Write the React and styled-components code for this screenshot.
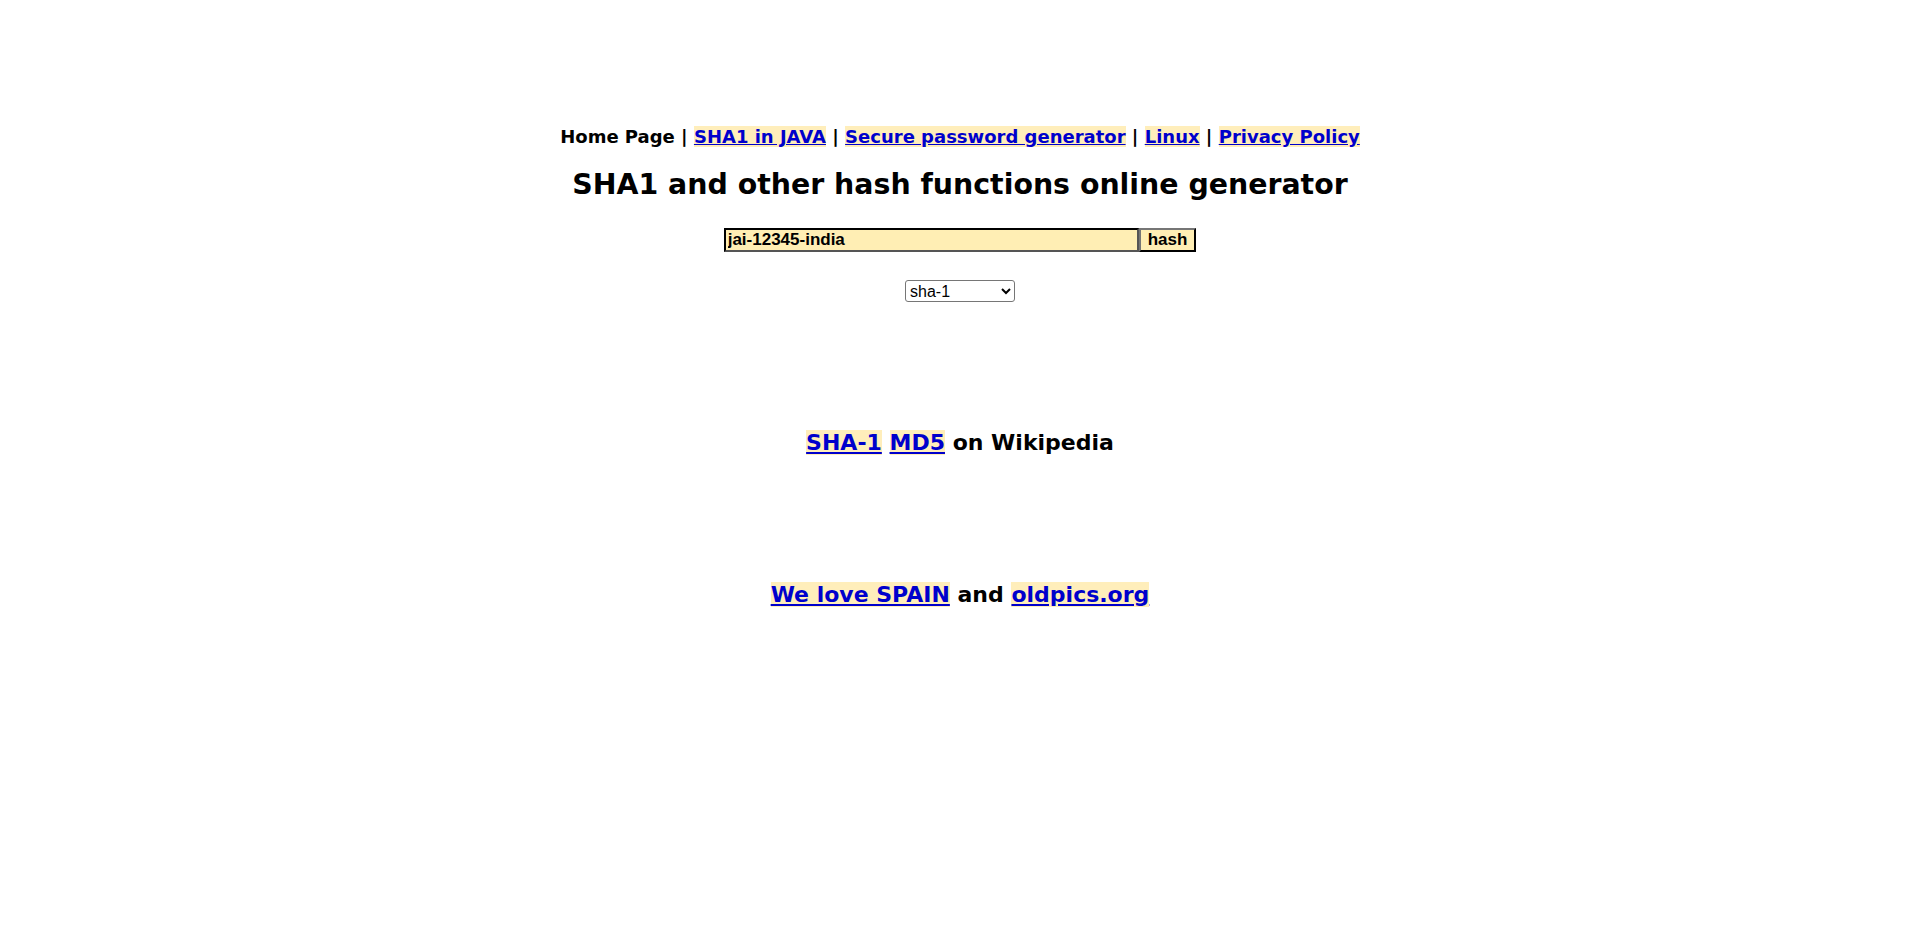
import React from 'react'
import styled, { createGlobalStyle } from 'styled-components'

const colors = {
  text: '#000000',
  link: '#0000cc',
  highlight: '#ffeebb',
  field: '#ffeeb4'
}

const GlobalStyle = createGlobalStyle`
  body {
    margin: 0;
    background: #ffffff;
    font-family: Verdana, "DejaVu Sans", sans-serif;
    color: ${colors.text};
  }
`

const Page = styled.div`
  display: flex;
  flex-direction: column;
  align-items: center;
  padding-top: 125px;
`

const Nav = styled.nav`
  font-size: 18px;
  font-weight: bold;
  line-height: 24px;
`

const Link = styled.a`
  color: ${colors.link};
  background: ${colors.highlight};
  text-decoration: underline;
`

const Title = styled.h1`
  margin: 19px 0 0;
  font-size: 28.4px;
  line-height: 34px;
  font-weight: bold;
`

const HashForm = styled.form`
  display: flex;
  margin-top: 26px;
`

const TextField = styled.input`
  width: 415px;
  height: 24px;
  box-sizing: border-box;
  padding: 0 2px;
  border: 2px inset #555;
  background: ${colors.field};
  font-family: "Liberation Sans", Arial, sans-serif;
  font-size: 17px;
  font-weight: bold;
  color: #000;
  outline: none;
`

const HashButton = styled.button`
  height: 24px;
  box-sizing: border-box;
  padding: 0 7px;
  border: 2px outset #222;
  background: ${colors.field};
  font-family: "Liberation Sans", Arial, sans-serif;
  font-size: 17px;
  font-weight: bold;
  color: #000;
`

const AlgoSelect = styled.select`
  margin-top: 28px;
  width: 110px;
  height: 22px;
  border: 1px solid #767676;
  border-radius: 3px;
  background: #ffffff;
  font-family: "Liberation Sans", Arial, sans-serif;
  font-size: 16px;
`

const Line = styled.p`
  margin: ${({ top }) => top}px 0 0;
  font-size: 22px;
  font-weight: bold;
  line-height: 28px;
`

const App = () => (
  <>
    <GlobalStyle />
    <Page>
      <Nav>
        Home Page | <Link href="#">SHA1 in JAVA</Link> |{' '}
        <Link href="#">Secure password generator</Link> |{' '}
        <Link href="#">Linux</Link> | <Link href="#">Privacy Policy</Link>
      </Nav>
      <Title>SHA1 and other hash functions online generator</Title>
      <HashForm onSubmit={e => e.preventDefault()}>
        <TextField defaultValue="jai-12345-india" />
        <HashButton type="submit">hash</HashButton>
      </HashForm>
      <AlgoSelect defaultValue="sha-1">
        <option>sha-1</option>
        <option>md5</option>
        <option>sha-256</option>
        <option>sha-384</option>
        <option>sha-512</option>
      </AlgoSelect>
      <Line top={127}>
        <Link href="#">SHA-1</Link> <Link href="#">MD5</Link> on Wikipedia
      </Line>
      <Line top={124}>
        <Link href="#">We love SPAIN</Link> and <Link href="#">oldpics.org</Link>
      </Line>
    </Page>
  </>
)

export default App
